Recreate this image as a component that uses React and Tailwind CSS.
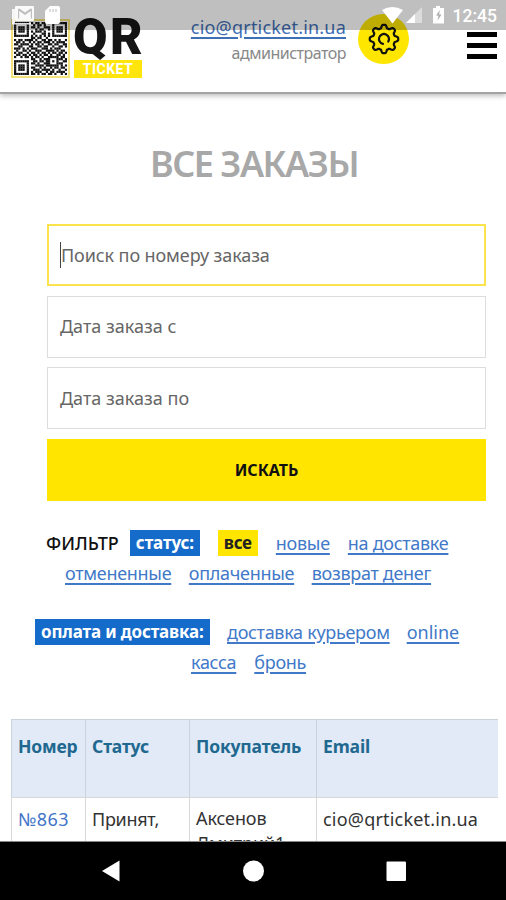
import React from "react";

// 25x25 module matrix of the logo's QR code
const QR = [
  "1111111010110110101111111",
  "1000001001011010001000001",
  "1011101011010011101011101",
  "1011101000101100101011101",
  "1011101010111010001011101",
  "1000001001000110101000001",
  "1111111010101010101111111",
  "0000000011011001000000000",
  "1011011110100110110101001",
  "0110100101011011101011110",
  "1101111010110100110110011",
  "0011000110011011001001101",
  "1110101011100111010111000",
  "0100110100111001111010110",
  "1011001011010110101101101",
  "0110110101101011010011010",
  "1001011010110100111110110",
  "0000000011001011100011101",
  "1111111001101101101010011",
  "1000001011010011100011100",
  "1011101000111101111110101",
  "1011101011001010010110110",
  "1011101001110111101001001",
  "1000001010111001011011110",
  "1111111011010110110100101",
];

// Gear outline: a circle whose radius swells eight times per turn
const GEAR =
  "M" +
  Array.from({ length: 96 }, (_, i) => {
    const a = (i / 96) * Math.PI * 2;
    const r = 12.6 + 1.7 * Math.tanh(2 * Math.cos(8 * a));
    return (r * Math.cos(a)).toFixed(2) + " " + (r * Math.sin(a)).toFixed(2);
  }).join("L") +
  "Z";

const link = "tracking-[-0.3px] text-[#4179c8] underline decoration-[1.5px] underline-offset-[3px]";

function QrCode() {
  return (
    <svg className="h-[53px] w-[53px]" viewBox="0 0 25 25">
      <rect width="25" height="25" fill="#fff" />
      {QR.flatMap((row, y) =>
        [...row].map((c, x) => (c === "1" ? <rect key={x + "-" + y} x={x} y={y} width="1.05" height="1.05" fill="#111" /> : null))
      )}
    </svg>
  );
}

function StatusBar() {
  return (
    <div className="absolute inset-x-0 top-0 flex h-[30px] bg-black/25 text-white">
      <svg className="h-[30px] w-[506px]" viewBox="0 0 506 30" fill="#fff">
        <path d="M14 9h1v14h16v1.500H12V9z" opacity=".85" />
        <path fillRule="evenodd" d="M17 6h16q1 0 1 1v13q0 1-1 1H16q-1 0-1-1V7q0-1 1-1zM18 9v9.500h1.200V11l5.800 4 5.800-4v7.500H32V9l-1.500-.6-5.500 4-5.500-4z" opacity=".92" />
        <path d="M50 6h8q2 0 2 2v14q0 2-2 2H47q-2 0-2-2V11z" />
        <path d="M50 9v3M53 9v3M56 9v3" stroke="#bbb" strokeWidth="1" />
        <path d="M382 10Q392 4 403 10L392.500 23.500z" />
        <path d="M406 23 422 7v16z" opacity=".45" />
        <path d="M406 23 415 14v9z" />
        <path d="M433 8h3V6h4v2h4v15.500h-11z" />
        <path d="m440 10-4 5.500h2.500l-1 5 4-6H439z" fill="#aaa" />
      </svg>
      <span className="absolute right-[9px] top-[5px] font-[Roboto] text-[17.500px] font-medium leading-[22px]">12:45</span>
    </div>
  );
}

function Header() {
  return (
    <header className="relative flex h-[94px] items-start border-b-2 border-[#a3a3a3] bg-white shadow-[0_2px_5px_rgba(0,0,0,0.25)]">
      <div className="ml-[11px] mt-[19px] h-[59px] w-[59px] border-2 border-[#f3e27a] p-px">
        <QrCode />
      </div>
      <div className="ml-1 mt-[14px] w-[68px]">
        <div className="-ml-px h-[46px] font-[Roboto] text-[50px] font-black leading-[46px] tracking-[2.5px] text-[#151515]">QR</div>
        <div className="h-[18px] bg-[#ffe50c] text-center font-[Roboto] text-[14px] font-bold leading-[19px] tracking-[0.5px] text-white">TICKET</div>
      </div>
      <div className="ml-auto mt-[14px] text-right">
        <div className="text-[18px] leading-[26px] tracking-[0.2px] text-[#3f6fb5] underline decoration-[1.5px] underline-offset-[3px]">cio@qrticket.in.ua</div>
        <div className="text-[16px] leading-[26px] tracking-[-0.5px] text-[#888]">администратор</div>
      </div>
      <div className="ml-3 mt-[14px] flex h-[50px] w-[51px] items-center justify-center rounded-full bg-[#fee600]">
        <svg className="h-[32px] w-[32px]" viewBox="-16 -16 32 32" fill="none" stroke="#111" strokeWidth="2.2">
          <path strokeLinejoin="round" d={GEAR} />
          <path strokeLinecap="round" d="M-1 4.900A5 5 0 1 1 4.300 2.500" />
        </svg>
      </div>
      <div className="ml-[58px] mr-[9px] mt-[32px] flex w-[30px] flex-col gap-[6px]">
        <div className="h-[5px] bg-black" />
        <div className="h-[5px] bg-black" />
        <div className="h-[5px] bg-black" />
      </div>
      <StatusBar />
    </header>
  );
}

export default function App() {
  return (
    <div className="flex h-[900px] w-[506px] flex-col overflow-hidden bg-white font-['Noto_Sans',sans-serif]">
      <div className="flex h-[842px] flex-col overflow-hidden border-b border-[#888] [&>*]:shrink-0">
        <Header />
        <h1 className="mt-[45px] h-[50px] pl-[2px] text-center text-[36px] font-semibold leading-[50px] tracking-[-1.5px] text-[#a8a8a8]">ВСЕ ЗАКАЗЫ</h1>
        <form className="ml-[47px] mt-[35px] flex w-[439px] flex-col gap-[9.500px] text-[18px] text-[#666]">
          <div className="flex h-[62px] items-center border-2 border-[#fbe34b] pl-[11px]">
            <span className="h-[26px] w-px bg-[#444]" />
            <span className="tracking-[-0.1px]">Поиск по номеру заказа</span>
          </div>
          <div className="flex h-[62px] items-center border border-[#ddd] pl-[12px]">Дата заказа с</div>
          <div className="flex h-[62px] items-center border border-[#ddd] pl-[12px]">Дата заказа по</div>
          <button type="button" className="h-[62px] bg-[#ffe500] text-[16px] font-bold text-[#111]">ИСКАТЬ</button>
        </form>
        <div className="ml-[46px] mt-[27px] flex h-[30px] items-center text-[18px] leading-[26px]">
          <span className="font-medium text-[#111]">ФИЛЬТР</span>
          <span className="ml-[11px] w-[70px] bg-[#156bc9] px-[6px] text-[17px] font-bold tracking-[-0.1px] text-white">статус:</span>
          <span className="ml-[18px] w-[40px] bg-[#ffe500] px-[6px] text-[17px] font-bold tracking-[-0.3px] text-[#222]">все</span>
          <span className={"ml-[18px] " + link}>новые</span>
          <span className={"ml-[18px] " + link}>на доставке</span>
        </div>
        <div className="ml-[65px] flex h-[30px] items-center gap-[17.500px] text-[18px] leading-[26px]">
          <span className={link}>отмененные</span>
          <span className={link}>оплаченные</span>
          <span className={link}>возврат денег</span>
        </div>
        <div className="ml-[35px] mt-[29px] flex h-[30px] items-center gap-[17px] text-[18px] leading-[26px]">
          <span className="w-[175px] whitespace-nowrap bg-[#156bc9] px-[6px] text-[17px] font-bold tracking-[-0.15px] text-white">оплата и доставка:</span>
          <span className={link}>доставка курьером</span>
          <span className="text-[#4179c8] underline decoration-[1.5px] underline-offset-[3px]">online</span>
        </div>
        <div className="ml-[191px] flex h-[30px] items-center gap-[18px] text-[18px] leading-[26px]">
          <span className={link}>касса</span>
          <span className={link}>бронь</span>
        </div>
        <div className="ml-[11px] mt-[42px] grid w-[487px] grid-cols-[74px_104px_127px_182px] text-[18px] leading-[26px] text-[#333]">
          {["Номер", "Статус", "Покупатель", "Email"].map((h) => (
            <div key={h} className="h-[78px] border-l border-t border-[#cbd3dc] bg-[#e1eaf6] pl-[6px] pt-[13px] text-[17.500px] font-bold tracking-[-0.15px] text-[#20688f]">{h}</div>
          ))}
          <div className="h-[60px] border-l border-t border-[#d8d8d8] pl-[6px] pt-[8px] tracking-[0.4px] text-[#3f74c8]">№863</div>
          <div className="border-l border-t border-[#d8d8d8] pl-[6px] pt-[8px] tracking-[-0.3px]">Принят,</div>
          <div className="border-l border-t border-[#d8d8d8] pl-[6px] pt-[8px] leading-[25px] tracking-[-0.1px]">Аксенов<br />Дмитрий1</div>
          <div className="border-l border-t border-[#d8d8d8] pl-[6px] pt-[8px] tracking-[0.2px]">cio@qrticket.in.ua</div>
        </div>
      </div>
      <nav className="h-[58px] bg-black">
        <svg className="h-[58px] w-[506px]" viewBox="0 842 506 58" fill="#fff">
          <path d="M102 871 119.500 860.500V881.500z" />
          <circle cx="253.500" cy="871" r="10.500" />
          <rect x="386.500" y="861.500" width="19.500" height="19.500" rx="1" />
        </svg>
      </nav>
    </div>
  );
}
